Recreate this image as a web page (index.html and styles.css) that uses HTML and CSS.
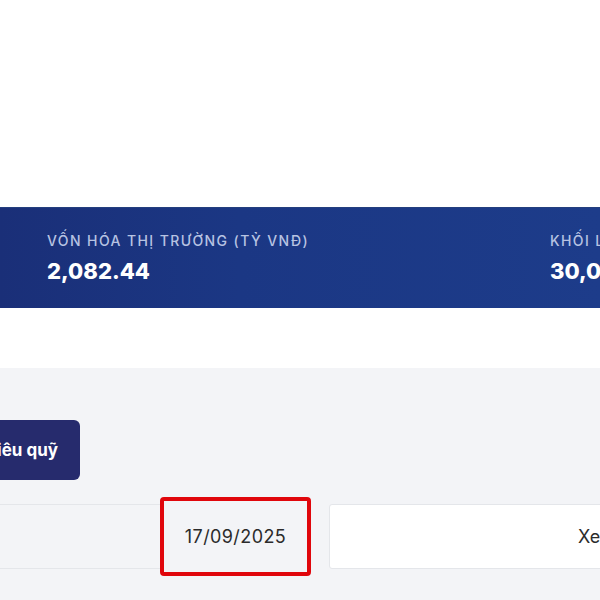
FILE: index.html
```html
<!DOCTYPE html>
<html lang="vi">
<head>
<meta charset="utf-8">
<link rel="stylesheet" href="styles.css">
</head>
<body>
<div class="page">
  <div class="top"></div>
  <section class="stats">
    <div class="stat">
      <div class="stat-label">VỐN HÓA THỊ TRƯỜNG (TỶ VNĐ)</div>
      <div class="stat-value">2,082.44</div>
    </div>
    <div class="stat">
      <div class="stat-label">KHỐI LƯỢNG</div>
      <div class="stat-value">30,000,000</div>
    </div>
  </section>
  <div class="gap"></div>
  <section class="panel">
    <div class="tabs">
      <button class="tab">Chỉ tiêu quỹ</button>
    </div>
    <div class="filter">
      <div class="field field-left"></div>
      <div class="field field-date">17/09/2025</div>
      <div class="field field-view">Xem</div>
    </div>
  </section>
</div>
</body>
</html>
```
FILE: styles.css
```css
* { box-sizing: border-box; }
html, body { margin: 0; padding: 0; }
body {
  width: 600px;
  height: 600px;
  overflow: hidden;
  background: #ffffff;
  font-family: Inter, "Open Sans", sans-serif;
}
.page { width: 600px; }
.top { height: 207px; background: #ffffff; }
.stats {
  height: 101px;
  display: flex;
  align-items: center;
  padding-left: 47px;
  background: linear-gradient(90deg, #1a2f78 0%, #1b3784 40%, #1d3c8a 100%);
  border-top: 1px solid #243f7e;
  white-space: nowrap;
}
.stat { width: 503px; flex: none; }
.stat-label {
  font-size: 14px;
  font-weight: 500;
  color: #b7c3e2;
  letter-spacing: 1.4px;
  line-height: 16px;
}
.stat-value {
  margin-top: 9px;
  font-size: 22px;
  font-weight: 800;
  color: #ffffff;
  line-height: 26px;
}
.gap { height: 60px; background: #ffffff; }
.panel {
  background: #f3f4f7;
  height: 232px;
  padding-top: 52px;
  overflow: hidden;
}
.tabs {
  width: 80px;
  display: flex;
  justify-content: flex-end;
}
.tab {
  flex: none;
  height: 60px;
  padding: 0 22px;
  border: none;
  border-radius: 6px;
  background: #262b6d;
  color: #ffffff;
  font-family: inherit;
  font-size: 17px;
  font-weight: 700;
  white-space: nowrap;
}
.filter {
  display: flex;
  align-items: center;
  margin-top: 17px;
  margin-left: -20px;
}
.field {
  height: 65px;
  display: flex;
  align-items: center;
  font-size: 18px;
  color: #2b2b2b;
  flex: none;
}
.field-left {
  width: 180px;
  border-top: 1px solid #e4e6ea;
  border-bottom: 1px solid #e4e6ea;
}
.field-date {
  width: 151px;
  height: 79px;
  border: 4px solid #e0060c;
  border-radius: 4px;
  justify-content: center;
  background: #f3f4f7;
  letter-spacing: 0.4px;
}
.field-view {
  margin-left: 18px;
  width: 320px;
  background: #ffffff;
  border: 1px solid #e4e6ea;
  border-radius: 3px;
  padding-left: 248px;
}
```
